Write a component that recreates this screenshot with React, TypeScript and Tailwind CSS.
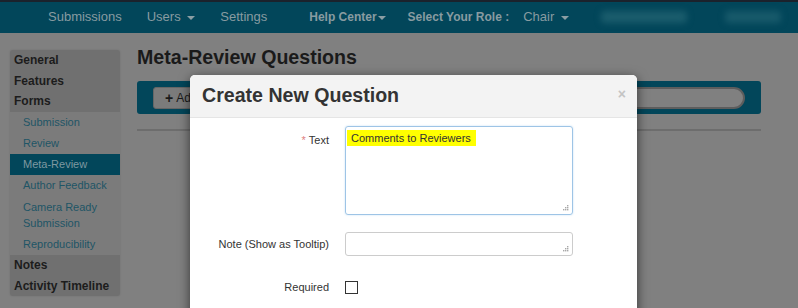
import React from "react";

const font = "font-['Liberation_Sans',Arial,sans-serif]";

function Caret({ className = "" }: { className?: string }) {
  return (
    <span
      className={`inline-block w-0 h-0 border-t-[4px] border-t-[#8b9ea4] border-x-[4px] border-x-transparent align-middle ${className}`}
    />
  );
}

function Grip() {
  return (
    <svg className="absolute right-[3px] bottom-[3px]" width="7" height="7" viewBox="0 0 7 7">
      <rect x="5" y="1" width="1.4" height="1.4" fill="#a8a8a8" />
      <rect x="3" y="3" width="1.4" height="1.4" fill="#a8a8a8" />
      <rect x="5" y="3" width="1.4" height="1.4" fill="#a8a8a8" />
      <rect x="1" y="5" width="1.4" height="1.4" fill="#a8a8a8" />
      <rect x="3" y="5" width="1.4" height="1.4" fill="#a8a8a8" />
      <rect x="5" y="5" width="1.4" height="1.4" fill="#a8a8a8" />
    </svg>
  );
}

function NavBar() {
  return (
    <div className="h-[33px] bg-[#02465a] border-t-[2px] border-[#1b222c] flex items-center text-[13px] text-[#889ba1] pb-[1px]">
      <span className="ml-[48px]">Submissions</span>
      <span className="ml-[25px]">
        Users <Caret className="ml-[3px]" />
      </span>
      <span className="ml-[25px]">Settings</span>
      <span className="ml-[42px] font-bold text-[12px]">
        Help Center<Caret className="ml-[1px]" />
      </span>
      <span className="ml-[22px] font-bold text-[12px]">Select Your Role :</span>
      <span className="ml-[14px]">
        Chair <Caret className="ml-[3px]" />
      </span>
      {/* blurred account info */}
      <div className="ml-[32px] w-[86px] h-[12px] bg-[#1a5c6c] blur-[3px] rounded" />
      <div className="ml-[38px] w-[56px] h-[12px] bg-[#17596a] blur-[3px] rounded" />
    </div>
  );
}

const headerItems = ["General", "Features", "Forms"];
const formItems = ["Submission", "Review", "Meta-Review", "Author Feedback", "Camera Ready Submission", "Reproducibility"];
const footerItems = ["Notes", "Activity Timeline"];

function Sidebar() {
  return (
    <div className="w-[110px] rounded-[3px] overflow-hidden shadow-[0_0_2px_rgba(0,0,0,0.15)] bg-[#7b7b7b]">
      <div className="bg-[#707070]">
        {headerItems.map((item) => (
          <div key={item} className="px-[4px] h-[20.7px] leading-[20.7px] text-[12px] font-bold text-[#1c1c1c]">
            {item}
          </div>
        ))}
      </div>
      {formItems.map((item) => (
        <div
          key={item}
          className={`pl-[13px] pr-[4px] py-[3px] text-[11px] ${
            item === "Meta-Review" ? "bg-[#02465a] text-[#7e98a0]" : "text-[#1e5566]"
          } ${item === "Camera Ready Submission" ? "leading-[16px]" : "leading-[15px]"}`}
        >
          {item === "Camera Ready Submission" ? (
            <>
              Camera Ready
              <br />
              Submission
            </>
          ) : (
            item
          )}
        </div>
      ))}
      <div className="bg-[#707070]">
        {footerItems.map((item) => (
          <div key={item} className="px-[4px] h-[20.5px] leading-[20.5px] text-[12px] font-bold text-[#1c1c1c]">
            {item}
          </div>
        ))}
      </div>
    </div>
  );
}

function MainContent() {
  return (
    <div className="ml-[17px] w-[624px]">
      <h1 className="text-[19.6px] font-bold text-[#1a1a1a] leading-[22px] mt-[-4px]">Meta-Review Questions</h1>
      <div className="mt-[13px] h-[33px] bg-[#02465a] rounded-[3px] flex items-center px-[16px]">
        <div className="h-[22px] w-[90px] bg-[#7b7b7b] border border-[#666] rounded-[3px] flex items-center pl-[11px] text-[12px] text-[#1a1a1a]">
          <span className="font-bold text-[14px] mr-[3px] leading-none">+</span>Add
        </div>
        <div className="ml-auto h-[22px] w-[200px] rounded-full border-[2px] border-[#5d5d5d] bg-[#808080]" />
      </div>
      <div className="mt-[15px] h-[2px] bg-[#6d6d6d]" />
    </div>
  );
}

function Modal() {
  return (
    <div className="absolute left-[190px] top-[75px] w-[447px] h-[260px] bg-white rounded-t-[5px] shadow-[0_3px_12px_rgba(0,0,0,0.6)]">
      <div className="h-[43px] bg-[#f3f3f3] border-b border-[#e5e5e5] rounded-t-[5px] flex items-center pl-[12px] pr-[11px]">
        <h2 className="text-[19.6px] font-bold text-[#333] leading-none">Create New Question</h2>
        <span className="ml-auto text-[#c4c4c4] font-bold text-[14px] leading-none -mt-[5px]">×</span>
      </div>
      <div className="pt-[8px]">
        <div className="flex">
          <div className="w-[139px] text-right text-[11px] text-[#333] pt-[6px]">
            <span className="text-[#e07f7f] mr-[3px]">*</span>Text
          </div>
          <div className="ml-[16px] relative w-[228px] h-[89px] border border-[#9ec4e6] rounded-[3px] shadow-[0_0_2px_rgba(102,175,233,0.4)] pt-[3px] pl-[1px]">
            <div className="w-fit bg-[#ffff00] text-[#333] text-[11px] leading-[16px] pl-[4px] pr-[5px]">
              Comments to Reviewers
            </div>
            <Grip />
          </div>
        </div>
        <div className="flex mt-[17px] items-center">
          <div className="w-[139px] text-right text-[11px] text-[#333]">Note (Show as Tooltip)</div>
          <div className="ml-[16px] relative w-[228px] h-[24px] border border-[#cccccc] rounded-[3px]">
            <Grip />
          </div>
        </div>
        <div className="flex mt-[23px] items-center">
          <div className="w-[139px] text-right text-[11px] text-[#333]">Required</div>
          <div className="ml-[16px] w-[13px] h-[13px] border border-[#333] bg-white" />
        </div>
      </div>
    </div>
  );
}

export default function App() {
  return (
    <div className={`${font} relative w-[798px] h-[308px] overflow-hidden bg-[#808080]`}>
      <NavBar />
      <div className="flex pl-[10px] pt-[17px]">
        <Sidebar />
        <MainContent />
      </div>
      <Modal />
    </div>
  );
}
